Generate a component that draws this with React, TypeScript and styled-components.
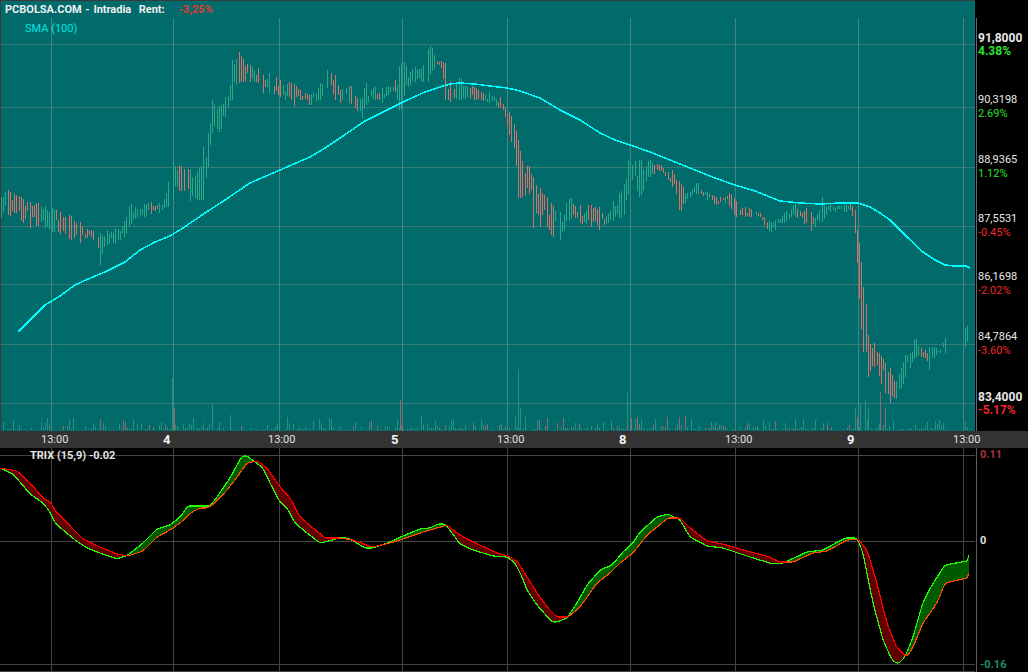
import React from "react";
import styled, { createGlobalStyle } from "styled-components";

type Point = [number, number];
type Env = [number, number, number];

const FONT = `Roboto, "Liberation Sans", sans-serif`;

// hi / lo of the price bars, read off the chart
const ENVELOPE: Env[] = [
  [1, 197, 218], [7, 189, 214], [10, 192, 216], [15, 194, 212], [22, 198, 222], [30, 202, 228],
  [37, 203, 226], [45, 206, 228], [53, 208, 232], [60, 212, 234], [70, 215, 240], [80, 222, 243],
  [91, 230, 237], [100, 233, 265], [102, 236, 254], [107, 230, 245], [115, 228, 244], [125, 220, 236],
  [130, 203, 225], [135, 207, 218], [145, 204, 217], [150, 202, 214], [160, 203, 213], [165, 198, 207],
  [168, 182, 207], [172, 163, 200], [180, 165, 190], [190, 170, 201], [198, 172, 200], [203, 147, 200],
  [208, 133, 167], [212, 100, 133], [220, 107, 132], [225, 97, 117], [232, 60, 100], [238, 50, 83],
  [242, 58, 82], [250, 65, 82], [258, 68, 83], [263, 75, 93], [270, 73, 93], [280, 80, 97],
  [293, 83, 107], [300, 90, 100], [310, 95, 105], [320, 83, 100], [327, 70, 88], [335, 75, 100],
  [340, 90, 103], [350, 85, 103], [362, 98, 118], [365, 83, 105], [375, 87, 100], [382, 88, 103],
  [395, 80, 92], [400, 63, 115], [403, 62, 97], [415, 67, 82], [422, 68, 82], [428, 49, 82],
  [431, 44, 72], [435, 58, 68], [442, 61, 68], [445, 63, 100], [450, 82, 102], [460, 78, 100],
  [475, 88, 100], [490, 92, 103], [500, 97, 108], [505, 107, 117], [510, 113, 140], [515, 127, 150],
  [518, 140, 198], [521, 157, 198], [525, 173, 195], [528, 163, 185], [533, 177, 228], [540, 188, 227],
  [547, 197, 227], [552, 205, 237], [560, 212, 240], [570, 197, 218], [580, 205, 223], [590, 205, 227],
  [600, 207, 230], [607, 217, 223], [612, 202, 222], [620, 192, 217], [623, 190, 220], [628, 160, 195],
  [640, 160, 197], [650, 160, 177], [660, 165, 170], [672, 170, 187], [680, 183, 213], [690, 192, 197],
  [697, 182, 193], [707, 192, 200], [715, 197, 205], [725, 197, 203], [730, 192, 207], [735, 200, 217],
  [745, 207, 217], [750, 208, 217], [760, 213, 217], [765, 218, 227], [770, 222, 232], [775, 220, 230],
  [785, 212, 222], [795, 203, 217], [810, 210, 232], [815, 218, 227], [822, 197, 222], [830, 205, 212],
  [845, 205, 212], [850, 203, 210], [855, 210, 233], [857, 230, 263], [860, 250, 317], [863, 287, 352],
  [867, 310, 352], [868, 335, 377], [874, 343, 367], [877, 352, 365], [880, 354, 382], [885, 363, 393],
  [890, 368, 403], [893, 379, 393], [895, 383, 403], [898, 377, 390], [902, 365, 387], [905, 355, 377],
  [910, 353, 368], [915, 337, 357], [920, 348, 357], [925, 350, 358], [929, 347, 370], [935, 347, 355],
  [940, 350, 353], [945, 338, 353], [965, 328, 347], [967, 326, 342],
];

const SMA: Point[] = [
  [18, 332], [30, 320], [45, 305], [60, 296], [75, 285], [88, 279], [105, 272], [125, 262], [140, 250],
  [155, 242], [170, 236], [183, 228], [205, 213], [225, 200], [250, 183], [280, 170], [310, 157],
  [325, 148], [340, 138], [365, 121], [385, 111], [405, 101], [425, 92], [440, 87], [450, 84], [460, 83],
  [475, 84], [490, 86], [507, 88], [520, 91], [540, 98], [560, 110], [580, 120], [600, 133], [615, 140],
  [630, 145], [650, 152], [665, 158], [680, 164], [700, 172], [715, 178], [735, 185], [755, 191],
  [770, 197], [780, 201], [800, 203], [820, 204], [840, 203], [858, 203], [870, 207], [880, 213],
  [890, 220], [900, 230], [908, 238], [923, 252], [935, 260], [945, 265], [955, 266], [966, 266], [970, 268],
];

const TRIX_GREEN: Point[] = [
  [0, 468], [13, 474], [20, 482], [30, 494], [43, 503], [50, 512], [55, 523], [63, 530], [75, 540],
  [87, 548], [100, 553], [117, 559], [128, 555], [143, 543], [157, 529], [170, 525], [180, 517],
  [188, 506], [200, 506], [210, 506], [217, 497], [230, 478], [242, 456], [247, 456], [255, 462],
  [263, 468], [270, 483], [280, 502], [287, 508], [295, 523], [307, 533], [320, 543], [333, 540],
  [340, 537], [350, 539], [365, 548], [373, 548], [390, 542], [403, 536], [420, 529], [430, 528],
  [438, 524], [445, 524], [452, 533], [460, 544], [473, 550], [493, 556], [507, 557], [515, 563],
  [522, 577], [527, 590], [537, 605], [552, 622], [557, 622], [567, 618], [577, 603], [587, 585],
  [600, 570], [612, 565], [623, 552], [633, 543], [640, 532], [657, 517], [668, 514], [680, 520],
  [690, 537], [707, 546], [723, 548], [750, 557], [773, 564], [783, 563], [807, 552], [823, 550],
  [845, 538], [857, 538], [863, 553], [873, 603], [883, 640], [892, 660], [898, 664], [905, 657],
  [913, 637], [923, 602], [932, 585], [945, 565], [967, 561], [969, 555],
];

const TRIX_RED: Point[] = [
  [0, 468], [17, 471], [30, 483], [43, 498], [50, 502], [57, 513], [63, 518], [72, 528], [83, 539],
  [100, 547], [117, 554], [128, 556], [143, 551], [157, 537], [170, 530], [180, 523], [192, 512],
  [200, 508], [207, 508], [215, 503], [227, 490], [237, 477], [247, 463], [257, 461], [267, 468],
  [280, 487], [290, 498], [300, 517], [313, 528], [325, 538], [340, 538], [353, 540], [372, 547],
  [390, 543], [403, 539], [423, 532], [447, 525], [457, 533], [467, 539], [480, 545], [497, 553],
  [508, 556], [518, 562], [527, 577], [537, 593], [548, 608], [557, 617], [568, 617], [580, 607],
  [597, 583], [610, 573], [620, 563], [633, 553], [647, 535], [657, 527], [668, 518], [680, 518],
  [690, 528], [707, 541], [723, 544], [750, 552], [767, 556], [780, 562], [793, 562], [813, 553],
  [827, 551], [847, 540], [858, 539], [867, 550], [877, 583], [887, 623], [897, 648], [907, 657],
  [913, 647], [923, 623], [937, 603], [945, 583], [967, 578], [969, 573],
];

const VOLUME_SPIKES: [number, number, boolean][] = [
  [100, 419, true], [172, 378, false], [174, 408, true], [212, 404, false], [230, 415, false],
  [400, 400, true], [402, 414, true], [518, 369, false], [520, 408, false], [627, 393, false],
  [631, 418, true], [855, 408, false], [857, 417, true], [860, 403, false], [865, 400, false],
  [868, 407, false], [880, 392, true], [885, 408, true], [893, 421, false],
];

const PRICE_GRID_X = [51, 173, 279, 402, 507, 630, 735, 858, 963];
const PRICE_GRID_Y = [44, 107, 167, 226, 284, 344, 403];
const TRIX_GRID_Y = [7, 93, 216, 223];

const BAR_STEP = 2.2;

const random = (seed: number) => {
  const v = Math.sin(seed * 127.1) * 43758.5453;
  return v - Math.floor(v);
};

const interpolate = (points: Point[], x: number) => {
  for (let i = 1; i < points.length; i++) {
    const [x0, y0] = points[i - 1];
    const [x1, y1] = points[i];
    if (x <= x1) return y0 + ((y1 - y0) * (x - x0)) / (x1 - x0 || 1);
  }
  return points[points.length - 1][1];
};

const buildBars = () => {
  const hi = ENVELOPE.map(([x, h]) => [x, h] as Point);
  const lo = ENVELOPE.map(([x, , l]) => [x, l] as Point);
  const mid = (a: number) => (interpolate(hi, a) + interpolate(lo, a)) / 2;
  const up: string[] = [];
  const down: string[] = [];
  for (let pos = 1; pos < 969; pos += BAR_STEP) {
    const x = Math.round(pos);
    if (x > 946 && x < 965) continue;
    const exact = ENVELOPE.some(([ex]) => Math.abs(ex - x) <= 1);
    // some periods have no trade at all
    if (!exact && random(x + 3.3) < 0.1) continue;
    let top = interpolate(hi, x);
    let bottom = interpolate(lo, x);
    if (!exact) {
      // most bars only cover part of the range, at a random height in it
      const span = bottom - top;
      const length = span * (0.3 + random(x) * 0.5);
      top += random(x + 0.37) * (span - length);
      bottom = top + length;
    }
    // colour comes in runs of a few bars, biased by the trend
    const trend = (mid(x + 4) - mid(x - 4)) / 3;
    const wave = Math.sin(x * 0.21 + 1.3) + Math.sin(x * 0.087);
    const falling = trend + wave * 0.9 > 0.35;
    (falling ? down : up).push(`M${x + 0.5} ${Math.round(top)}V${Math.round(bottom)}`);
  }
  return { up: up.join(""), down: down.join("") };
};

const buildVolume = () => {
  const up: string[] = [];
  const down: string[] = [];
  for (let x = 3; x < 970; x += 2) {
    if (x > 946 && x < 965) continue;
    const r = random(x + 5.3);
    if (r < 0.35) continue;
    const h = 1 + Math.round(random(x + 9.1) ** 3 * 13);
    (random(x + 2.2) > 0.65 ? down : up).push(`M${x + 0.5} ${430 - h}V430`);
  }
  VOLUME_SPIKES.forEach(([x, y, red]) => (red ? down : up).push(`M${x + 0.5} ${y}V430`));
  return { up: up.join(""), down: down.join("") };
};

const toPoints = (points: Point[]) => points.map(([x, y]) => `${x},${y}`).join(" ");

// sample a traced line per pixel and take the corners off it
const smoothLine = (points: Point[]) => {
  const raw: number[] = [];
  for (let x = 0; x <= 969; x++) raw.push(interpolate(points, x));
  return raw.map((_, x) => {
    if (x > 964) return raw[x];
    const from = Math.max(0, x - 2);
    const window = raw.slice(from, x + 3);
    return window.reduce((a, b) => a + b, 0) / window.length;
  });
};

const buildTrix = () => {
  const green = smoothLine(TRIX_GREEN);
  const red = smoothLine(TRIX_RED);
  const greenFill: string[] = [];
  const redFill: string[] = [];
  const greenLine: string[] = [];
  const redAbove: string[] = [];
  const redBelow: string[] = [];
  for (let x = 0; x < 969; x++) {
    const g = green[x];
    const r = red[x];
    const rising = g <= r;
    (rising ? greenFill : redFill).push(`M${x + 0.5} ${Math.min(g, r)}V${Math.max(g, r)}`);
    greenLine.push(`M${x} ${g}L${x + 1} ${green[x + 1]}`);
    (rising ? redBelow : redAbove).push(`M${x} ${r}L${x + 1} ${red[x + 1]}`);
  }
  return {
    greenFill: greenFill.join(""),
    redFill: redFill.join(""),
    greenLine: greenLine.join(""),
    redAbove: redAbove.join(""),
    redBelow: redBelow.join(""),
  };
};

const bars = buildBars();
const volume = buildVolume();
const trix = buildTrix();

const GlobalStyle = createGlobalStyle`
  html, body {
    margin: 0;
    background: #000;
    overflow: hidden;
  }
`;

const Page = styled.div`
  width: 1028px;
  height: 672px;
  display: flex;
  flex-direction: column;
  font-family: ${FONT};
  background: #000;
`;

const Panel = styled.section<{ $height: number }>`
  display: flex;
  height: ${(p) => p.$height}px;
  flex: none;
`;

const PricePlot = styled.div`
  position: relative;
  width: 975px;
  height: 100%;
  box-sizing: border-box;
  background: #006b6a;
  box-shadow: inset 1px 1px 0 #3a3a3a;
`;

const TrixPlot = styled.div`
  position: relative;
  width: 975px;
  height: 100%;
`;

const ChartSvg = styled.svg`
  display: block;
`;

const Heading = styled.div`
  position: absolute;
  top: 3px;
  left: 5px;
  display: flex;
  font-size: 11px;
  line-height: 13px;
  font-weight: 700;
  word-spacing: 1px;
  color: #f0f0f0;
  white-space: pre;
`;

const Rent = styled.span`
  margin-left: 14px;
  color: #e53935;
`;

const Legend = styled.div`
  position: absolute;
  top: 22px;
  left: 25px;
  font-size: 11px;
  line-height: 14px;
  color: #00e5e5;
`;

const TrixLegend = styled.div`
  position: absolute;
  top: 1px;
  left: 30px;
  font-size: 11px;
  line-height: 13px;
  font-weight: 700;
  color: #e6e6e6;
`;

const AxisColumn = styled.div<{ $top: number }>`
  flex: 1;
  margin: ${(p) => p.$top}px 0 0 1px;
  padding: ${(p) => 30 - p.$top}px 0 0 1px;
  border-left: 1px solid #666;
`;

const AxisTick = styled.div<{ $height: number }>`
  height: ${(p) => p.$height}px;
`;

const AxisValue = styled.div<{ $strong?: boolean }>`
  font-size: ${(p) => (p.$strong ? 12 : 11)}px;
  font-weight: ${(p) => (p.$strong ? 700 : 400)};
  line-height: 14px;
  padding-top: ${(p) => (p.$strong ? 1 : 0)}px;
  margin-bottom: ${(p) => (p.$strong ? -1 : 0)}px;
  color: #e8e8e8;
`;

const AxisPercent = styled.div<{ $strong?: boolean; $up: boolean }>`
  font-size: ${(p) => (p.$strong ? 12 : 11)}px;
  font-weight: ${(p) => (p.$strong ? 700 : 400)};
  line-height: 14px;
  color: ${(p) => (p.$up ? "#2fe02f" : "#f02828")};
`;

const TimeBar = styled.div`
  display: grid;
  grid-template-columns: 122px 105px 123px 106px 122px 106px 122px 106px auto;
  align-items: center;
  flex: none;
  height: 17px;
  padding-left: 41px;
  background: #333;
`;

const TimeLabel = styled.span<{ $day?: boolean }>`
  font-size: ${(p) => (p.$day ? 13 : 11)}px;
  font-weight: ${(p) => (p.$day ? 700 : 400)};
  line-height: 14px;
  color: ${(p) => (p.$day ? "#f5f5f5" : "#e0e0e0")};
`;

const TrixAxis = styled.div`
  flex: 1;
  margin-left: 1px;
  padding-left: 3px;
  border-left: 1px solid #5a5a5a;
`;

const TrixValue = styled.div<{ $height: number; $color: string }>`
  height: ${(p) => p.$height}px;
  font-size: 11px;
  line-height: 14px;
  font-weight: 700;
  color: ${(p) => p.$color};
`;

const TICKS = [
  { value: "91,8000", pct: "4.38%", up: true, strong: true, height: 63 },
  { value: "90,3198", pct: "2.69%", up: true, height: 60 },
  { value: "88,9365", pct: "1.12%", up: true, height: 59 },
  { value: "87,5531", pct: "-0.45%", up: false, height: 58 },
  { value: "86,1698", pct: "-2.02%", up: false, height: 60 },
  { value: "84,7864", pct: "-3.60%", up: false, height: 59 },
  { value: "83,4000", pct: "-5.17%", up: false, strong: true, height: 30 },
];

const TIMES = ["13:00", "4", "13:00", "5", "13:00", "8", "13:00", "9", "13:00"];

const PriceChart = () => (
  <ChartSvg width={975} height={431} shapeRendering="crispEdges">
    <g stroke="#3c7a77" strokeWidth={1}>
      {PRICE_GRID_Y.map((y) => (
        <line key={y} x1={1} x2={975} y1={y + 0.5} y2={y + 0.5} />
      ))}
    </g>
    <g stroke="#4a8482" strokeWidth={1}>
      {PRICE_GRID_X.map((x) => (
        <line key={x} x1={x + 0.5} x2={x + 0.5} y1={18} y2={431} />
      ))}
    </g>
    <path d={volume.up} stroke="#2b8f82" fill="none" />
    <path d={volume.down} stroke="#96696a" fill="none" />
    <path d={bars.up} stroke="#2aa88a" fill="none" />
    <path d={bars.down} stroke="#d4736a" fill="none" />
    <polyline points={toPoints(SMA)} stroke="#00ffff" strokeWidth={1.5} fill="none" />
  </ChartSvg>
);

const TrixChart = () => (
  <ChartSvg width={975} height={224} shapeRendering="crispEdges">
    <g stroke="#444" strokeWidth={1}>
      {TRIX_GRID_Y.map((y) => (
        <line key={y} x1={0} x2={975} y1={y + 0.5} y2={y + 0.5} />
      ))}
      {PRICE_GRID_X.map((x) => (
        <line key={x} x1={x + 0.5} x2={x + 0.5} y1={0} y2={224} />
      ))}
    </g>
    <g transform="translate(0 -448)">
      <path d={trix.greenFill} stroke="#005a00" fill="none" />
      <path d={trix.redFill} stroke="#620000" fill="none" />
      <path d={trix.greenLine} stroke="#22ff00" strokeWidth={1.2} fill="none" />
      <path d={trix.redBelow} stroke="#ff4a00" strokeWidth={1.2} fill="none" />
      <path d={trix.redAbove} stroke="#ff0000" strokeWidth={1.2} fill="none" />
    </g>
  </ChartSvg>
);

export default function App() {
  return (
    <Page>
      <GlobalStyle />
      <Panel $height={431}>
        <PricePlot>
          <PriceChart />
          <Heading>
            PCBOLSA.COM - Intradia  Rent:<Rent>-3,25%</Rent>
          </Heading>
          <Legend>SMA (100)</Legend>
        </PricePlot>
        <AxisColumn $top={18}>
          {TICKS.map((t) => (
            <AxisTick key={t.value} $height={t.height}>
              <AxisValue $strong={t.strong}>{t.value}</AxisValue>
              <AxisPercent $strong={t.strong} $up={t.up}>
                {t.pct}
              </AxisPercent>
            </AxisTick>
          ))}
        </AxisColumn>
      </Panel>
      <TimeBar>
        {TIMES.map((t, i) => (
          <TimeLabel key={i} $day={t.length === 1}>
            {t}
          </TimeLabel>
        ))}
      </TimeBar>
      <Panel $height={224}>
        <TrixPlot>
          <TrixChart />
          <TrixLegend>TRIX (15,9) -0.02</TrixLegend>
        </TrixPlot>
        <TrixAxis>
          <TrixValue $height={86} $color="#a93535">0.11</TrixValue>
          <TrixValue $height={124} $color="#e0e0e0">0</TrixValue>
          <TrixValue $height={14} $color="#1f8f70">-0.16</TrixValue>
        </TrixAxis>
      </Panel>
    </Page>
  );
}
